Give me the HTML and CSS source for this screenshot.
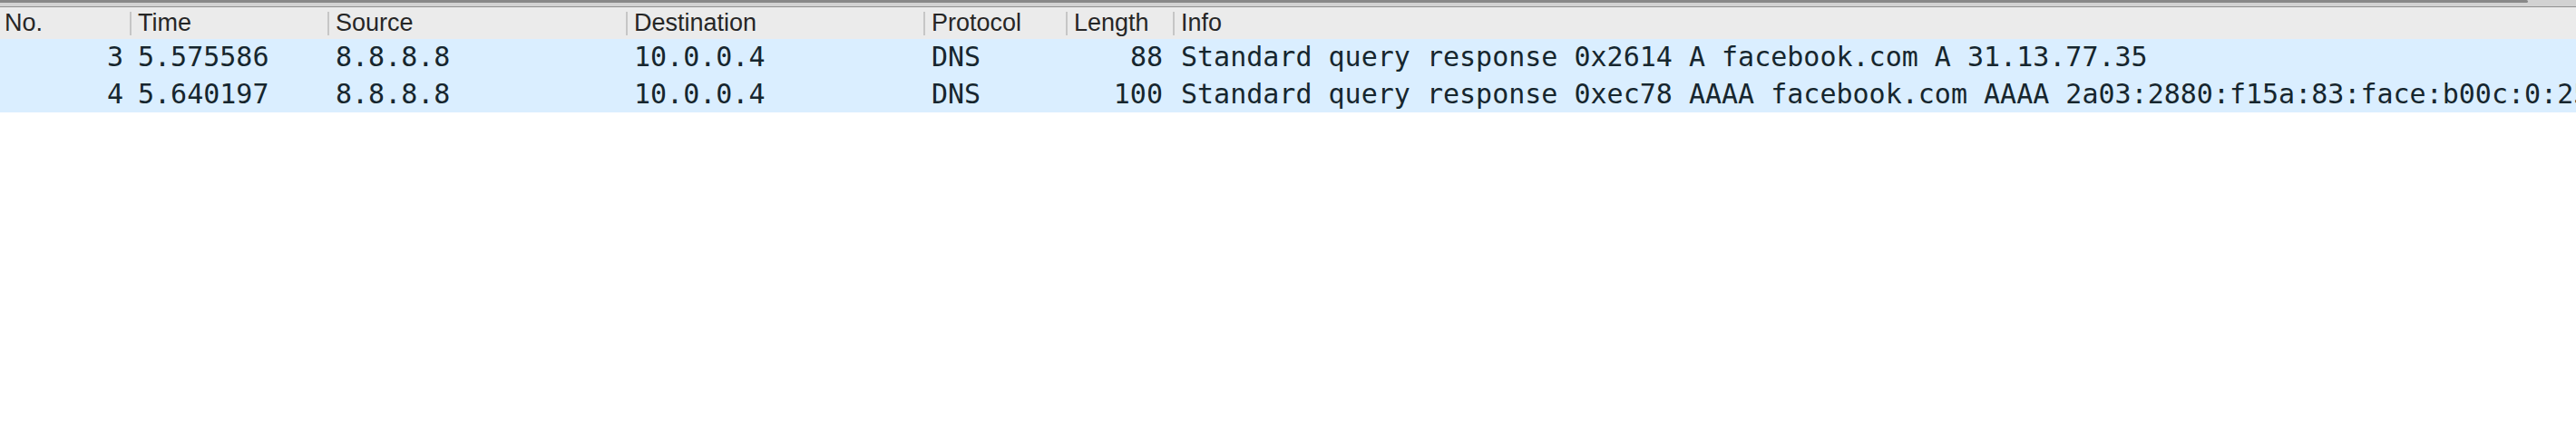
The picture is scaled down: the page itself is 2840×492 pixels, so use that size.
FILE: index.html
```html
<!DOCTYPE html>
<html>
<head>
<meta charset="utf-8">
<link rel="stylesheet" href="styles.css">
</head>
<body>
<div class="scrollbar"><div class="thumb"></div></div>
<div class="packets">
  <div class="row head">
    <div class="cell first">No.</div>
    <div class="cell sep">Time</div>
    <div class="cell sep">Source</div>
    <div class="cell sep">Destination</div>
    <div class="cell sep">Protocol</div>
    <div class="cell sep">Length</div>
    <div class="cell sep">Info</div>
  </div>
  <div class="row pkt">
    <div class="cell num">3</div>
    <div class="cell">5.575586</div>
    <div class="cell">8.8.8.8</div>
    <div class="cell">10.0.0.4</div>
    <div class="cell">DNS</div>
    <div class="cell len">88</div>
    <div class="cell info">Standard query response 0x2614 A facebook.com A 31.13.77.35</div>
  </div>
  <div class="row pkt">
    <div class="cell num">4</div>
    <div class="cell">5.640197</div>
    <div class="cell">8.8.8.8</div>
    <div class="cell">10.0.0.4</div>
    <div class="cell">DNS</div>
    <div class="cell len">100</div>
    <div class="cell info">Standard query response 0xec78 AAAA facebook.com AAAA 2a03:2880:f15a:83:face:b00c:0:25de</div>
  </div>
</div>
</body>
</html>
```

FILE: styles.css
```css
html, body {
  margin: 0;
  padding: 0;
  background: #ffffff;
  width: 2840px;
  height: 492px;
  overflow: hidden;
}

.scrollbar {
  height: 7px;
  background: #d2d2d2;
  border-bottom: 1px solid #909090;
}

.thumb {
  width: 2787px;
  height: 3px;
  background: #888888;
  border-radius: 0 2px 2px 0;
}

.packets {
  width: 2840px;
}

.row {
  display: grid;
  grid-template-columns: 143px 218px 329px 328px 157px 118px 1fr;
  white-space: nowrap;
}

.cell {
  padding-left: 9px;
  overflow: hidden;
  min-width: 0;
}

.head {
  height: 35px;
  background: #ebebeb;
  font-family: "Liberation Sans", Arial, sans-serif;
  font-size: 27px;
  line-height: 35px;
  color: #262626;
}

.head .first {
  padding-left: 5px;
}

.head .sep {
  background: linear-gradient(#c6c6c6, #c6c6c6) no-repeat left 5px / 2px 26px;
}

.pkt {
  height: 40.5px;
  line-height: 40.5px;
  background: #daeeff;
  font-family: "DejaVu Sans Mono", Menlo, monospace;
  font-size: 30px;
  color: #16262e;
}

.pkt .num {
  text-align: right;
  padding-left: 0;
  padding-right: 7px;
}

.pkt .len {
  text-align: right;
  padding-left: 0;
  padding-right: 11px;
}

.pkt .info {
  overflow: hidden;
}
```
